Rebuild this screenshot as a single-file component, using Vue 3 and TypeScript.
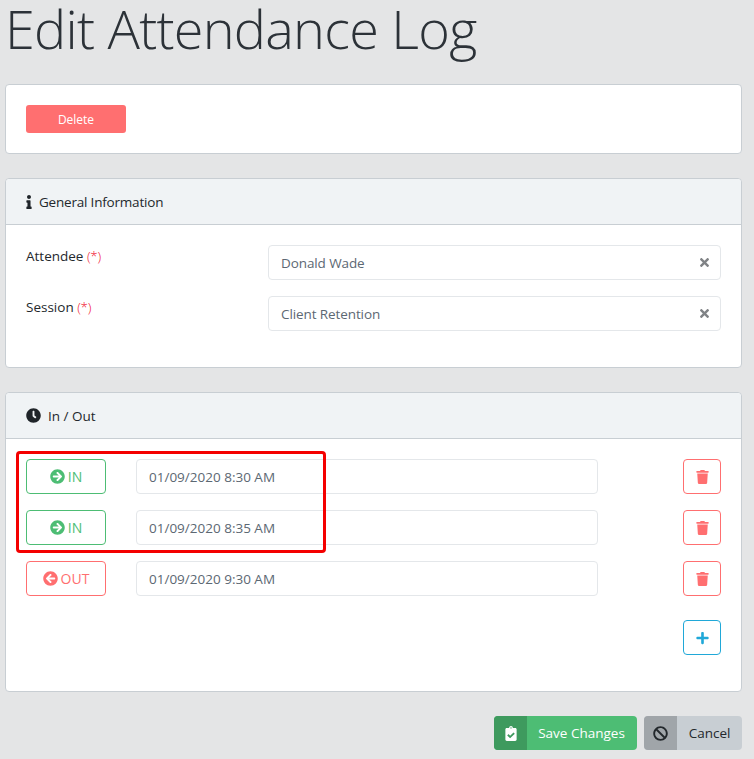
<script setup lang="ts">
const icons: Record<string, { vb: string; d: string }> = {
  trash: { vb: '0 0 448 512', d: 'M432 32H312l-9.4-18.7A24 24 0 0 0 281.1 0H166.8a23.72 23.72 0 0 0-21.4 13.3L136 32H16A16 16 0 0 0 0 48v32a16 16 0 0 0 16 16h416a16 16 0 0 0 16-16V48a16 16 0 0 0-16-16zM53.2 467a48 48 0 0 0 47.9 45h245.8a48 48 0 0 0 47.9-45L416 128H32z' },
  plus: { vb: '0 0 448 512', d: 'M416 208H272V64c0-17.67-14.33-32-32-32h-32c-17.67 0-32 14.33-32 32v144H32c-17.67 0-32 14.33-32 32v32c0 17.67 14.33 32 32 32h144v144c0 17.67 14.33 32 32 32h32c17.67 0 32-14.33 32-32V304h144c17.67 0 32-14.33 32-32v-32c0-17.67-14.33-32-32-32z' },
  times: { vb: '0 0 352 512', d: 'M242.72 256l100.07-100.07c12.28-12.28 12.28-32.19 0-44.48l-22.24-22.24c-12.28-12.28-32.19-12.28-44.48 0L176 189.28 75.93 89.21c-12.28-12.28-32.19-12.28-44.48 0L9.21 111.45c-12.28 12.28-12.28 32.19 0 44.48L109.28 256 9.21 356.07c-12.28 12.28-12.28 32.19 0 44.48l22.24 22.24c12.28 12.28 32.2 12.28 44.48 0L176 322.72l100.07 100.07c12.28 12.28 32.2 12.28 44.48 0l22.24-22.24c12.28-12.28 12.28-32.19 0-44.48L242.72 256z' },
  right: { vb: '0 0 512 512', d: 'M256 8c137 0 248 111 248 248S393 504 256 504 8 393 8 256 119 8 256 8zm-28.9 143.6l75.5 72.4H120c-13.3 0-24 10.7-24 24v16c0 13.3 10.7 24 24 24h182.6l-75.5 72.4c-9.7 9.3-9.9 24.8-.4 34.3l11 10.9c9.4 9.4 24.6 9.4 33.9 0L404.3 273c9.4-9.4 9.4-24.6 0-33.9L271.6 106.3c-9.4-9.4-24.6-9.4-33.9 0l-11 10.9c-9.5 9.6-9.3 25.1.4 34.4z' },
  left: { vb: '0 0 512 512', d: 'M256 504C119 504 8 393 8 256S119 8 256 8s248 111 248 248-111 248-248 248zm28.9-143.6L209.4 288H392c13.3 0 24-10.7 24-24v-16c0-13.3-10.7-24-24-24H209.4l75.5-72.4c9.7-9.3 9.9-24.8.4-34.3l-11-10.9c-9.4-9.4-24.6-9.4-33.9 0L107.7 239c-9.4 9.4-9.4 24.6 0 33.9l132.7 132.7c9.4 9.4 24.6 9.4 33.9 0l11-10.9c9.5-9.5 9.3-25-.4-34.3z' },
  clock: { vb: '0 0 512 512', d: 'M256,8C119,8,8,119,8,256S119,504,256,504,504,393,504,256,393,8,256,8Zm92.49,313h0l-20,25a16,16,0,0,1-22.49,2.5h0l-67-49.72a40,40,0,0,1-15-31.23V112a16,16,0,0,1,16-16h32a16,16,0,0,1,16,16V256l58,42.5A16,16,0,0,1,348.49,321Z' },
  ban: { vb: '0 0 512 512', d: 'M256 8C119.034 8 8 119.033 8 256s111.034 248 248 248 248-111.034 248-248S392.967 8 256 8zm130.108 117.892c65.448 65.448 70 165.481 20.677 235.637L150.47 105.216c70.204-49.356 170.226-44.735 235.638 20.676zM125.892 386.108c-65.448-65.448-70-165.481-20.677-235.637L361.53 406.784c-70.203 49.356-170.226 44.736-235.638-20.676z' },
  info: { vb: '0 0 192 512', d: 'M20 424.229h20V279.771H20c-11.046 0-20-8.954-20-20V212c0-11.046 8.954-20 20-20h112c11.046 0 20 8.954 20 20v212.229h20c11.046 0 20 8.954 20 20V492c0 11.046-8.954 20-20 20H20c-11.046 0-20-8.954-20-20v-47.771c0-11.046 8.954-20 20-20zM96 0C56.235 0 24 32.235 24 72s32.235 72 72 72 72-32.235 72-72S135.764 0 96 0z' },
  clip: { vb: '0 0 384 512', d: 'M336 64h-80c0-35.3-28.7-64-64-64s-64 28.7-64 64H48C21.5 64 0 85.5 0 112v352c0 26.5 21.5 48 48 48h288c26.5 0 48-21.5 48-48V112c0-26.5-21.5-48-48-48zM192 40c13.3 0 24 10.7 24 24s-10.7 24-24 24-24-10.7-24-24 10.7-24 24-24zm121.2 231.8l-143 141.8c-4.7 4.7-12.3 4.6-17-.1l-82.6-83.3c-4.7-4.7-4.6-12.3.1-17L99.1 285c4.7-4.7 12.3-4.6 17 .1l46 46.4 106-105.2c4.7-4.7 12.3-4.6 17 .1l28.2 28.4c4.7 4.8 4.6 12.3-.1 17z' },
}

const fields = [
  { label: 'Attendee', value: 'Donald Wade' },
  { label: 'Session', value: 'Client Retention' },
]

const logs = [
  { kind: 'in', label: 'IN', icon: 'right', time: '01/09/2020 8:30 AM' },
  { kind: 'in', label: 'IN', icon: 'right', time: '01/09/2020 8:35 AM' },
  { kind: 'out', label: 'OUT', icon: 'left', time: '01/09/2020 9:30 AM' },
]
</script>

<template>
  <div class="page">
    <h1 class="title">Edit Attendance Log</h1>

    <section class="card">
      <div class="body top">
        <button class="delete">Delete</button>
      </div>
    </section>

    <section class="card">
      <header class="head tight">
        <svg class="head-info" :viewBox="icons.info.vb"><path :d="icons.info.d" /></svg>
        <span>General Information</span>
      </header>
      <div class="body">
        <div v-for="f in fields" :key="f.label" class="field">
          <label class="label">{{ f.label }} <em>(*)</em></label>
          <div class="input select">
            <span>{{ f.value }}</span>
            <svg class="clear" :viewBox="icons.times.vb"><path :d="icons.times.d" /></svg>
          </div>
        </div>
      </div>
    </section>

    <section class="card times">
      <header class="head">
        <svg class="head-clock" :viewBox="icons.clock.vb"><path :d="icons.clock.d" /></svg>
        <span>In / Out</span>
      </header>
      <div class="body">
        <div v-for="l in logs" :key="l.time" class="log">
          <button class="kind" :class="l.kind">
            <svg :viewBox="icons[l.icon].vb"><path :d="icons[l.icon].d" /></svg>
            {{ l.label }}
          </button>
          <div class="input time">{{ l.time }}</div>
          <button class="square danger">
            <svg :viewBox="icons.trash.vb"><path :d="icons.trash.d" /></svg>
          </button>
        </div>
        <div class="add-row">
          <button class="square info">
            <svg :viewBox="icons.plus.vb"><path :d="icons.plus.d" /></svg>
          </button>
        </div>
      </div>
      <div class="highlight"></div>
    </section>

    <footer class="actions">
      <button class="action save">
        <span class="cap"><svg :viewBox="icons.clip.vb"><path :d="icons.clip.d" /></svg></span>
        <span class="text">Save Changes</span>
      </button>
      <button class="action cancel">
        <span class="cap"><svg :viewBox="icons.ban.vb"><path :d="icons.ban.d" /></svg></span>
        <span class="text">Cancel</span>
      </button>
    </footer>
  </div>
</template>

<style>
html, body { background: #e4e5e6; }
</style>

<style scoped>
.page {
  box-sizing: border-box;
  width: 754px;
  height: 759px;
  overflow: hidden;
  padding: 0 12px 0 5px;
  background: #e4e5e6;
  font-family: "Open Sans", "Noto Sans", sans-serif;
  font-size: 13.5px;
  color: #23282c;
}
.title {
  margin: 0;
  height: 84px;
  font-size: 54px;
  line-height: 56px;
  font-weight: 300;
  color: #2c3238;
  letter-spacing: -0.75px;
  white-space: nowrap;
}
.card {
  position: relative;
  margin-bottom: 24px;
  background: #fff;
  border: 1px solid #c8ced3;
  border-radius: 4px;
}
.head {
  display: flex;
  align-items: center;
  height: 46px;
  padding: 0 20px;
  background: #f0f3f5;
  border-bottom: 1px solid #c8ced3;
  border-radius: 4px 4px 0 0;
  box-sizing: border-box;
  gap: 7px;
}
.head.tight { letter-spacing: -0.2px; }
.head svg { fill: #1f2429; display: block; }
.head-info { width: 6px; height: 14px; }
.head-clock { width: 15px; height: 15px; }
.body { padding: 20px 20px 36px; }
.body.top { padding: 20px; }
.delete {
  display: block;
  width: 100px;
  height: 28px;
  border: 0;
  border-radius: 3px;
  background: #ff6f70;
  color: #fff;
  font: 500 12px "Open Sans", sans-serif;
}
.field {
  display: flex;
  margin-bottom: 16px;
}
.field:last-child { margin-bottom: 0; }
.label {
  width: 242px;
  padding-top: 2px;
  line-height: 18px;
}
.label em { font-style: normal; color: #f0142f; letter-spacing: -0.3px; font-weight: 300; }
.input {
  box-sizing: border-box;
  height: 35px;
  display: flex;
  align-items: center;
  padding: 0 12px;
  background: #fff;
  border: 1px solid #e4e7ea;
  border-radius: 4px;
  color: #5c6873;
}
.select {
  flex: 1;
  justify-content: space-between;
  letter-spacing: -0.1px;
}
.clear { width: 9px; height: 13px; fill: #808386; margin-right: -1px; }
.log {
  display: flex;
  align-items: center;
  margin-bottom: 16px;
}
.kind {
  box-sizing: border-box;
  width: 80px;
  height: 35px;
  display: flex;
  align-items: center;
  justify-content: center;
  gap: 3px;
  background: #fff;
  border: 1px solid;
  border-radius: 4px;
  font: 14px "Open Sans", sans-serif;
}
.kind svg { width: 15px; height: 15px; fill: currentColor; }
.kind.in { color: #4dbd74; border-color: #4dbd74; }
.kind.out { color: #ff6f70; border-color: #ff6f70; }
.time { width: 462px; margin-left: 30px; }
.square {
  box-sizing: border-box;
  width: 38px;
  height: 35px;
  margin-left: auto;
  display: flex;
  align-items: center;
  justify-content: center;
  padding: 0;
  background: #fff;
  border: 1px solid;
  border-radius: 4px;
}
.square svg { fill: currentColor; width: 13px; height: 14px; }
.square.danger { color: #ff6f70; }
.square.info { color: #20a8d8; }
.add-row { display: flex; margin-top: 24px; }
.highlight {
  position: absolute;
  left: 10px;
  top: 58px;
  width: 310px;
  height: 102px;
  box-sizing: border-box;
  border: 3px solid #f40000;
  border-radius: 4px;
  pointer-events: none;
}
.actions {
  display: flex;
  justify-content: flex-end;
  gap: 7px;
}
.action {
  display: flex;
  height: 34px;
  padding: 0;
  border: 0;
  border-radius: 4px;
  overflow: hidden;
  font: 13.5px "Open Sans", sans-serif;
  align-items: stretch;
}
.cap {
  width: 33px;
  display: flex;
  align-items: center;
  justify-content: center;
}
.text { display: flex; align-items: center; justify-content: center; flex: 1; }
.save { width: 143px; background: #4dbd74; color: #fff; }
.save .text { padding-right: 1px; }
.save .cap { background: #3e9a5e; }
.save svg { width: 12px; height: 15px; fill: #fff; }
.cancel { width: 98px; background: #c8ced3; color: #23282c; }
.cancel .cap { background: #a0a5a9; }
.cancel svg { width: 15px; height: 15px; fill: #23282c; }
</style>
